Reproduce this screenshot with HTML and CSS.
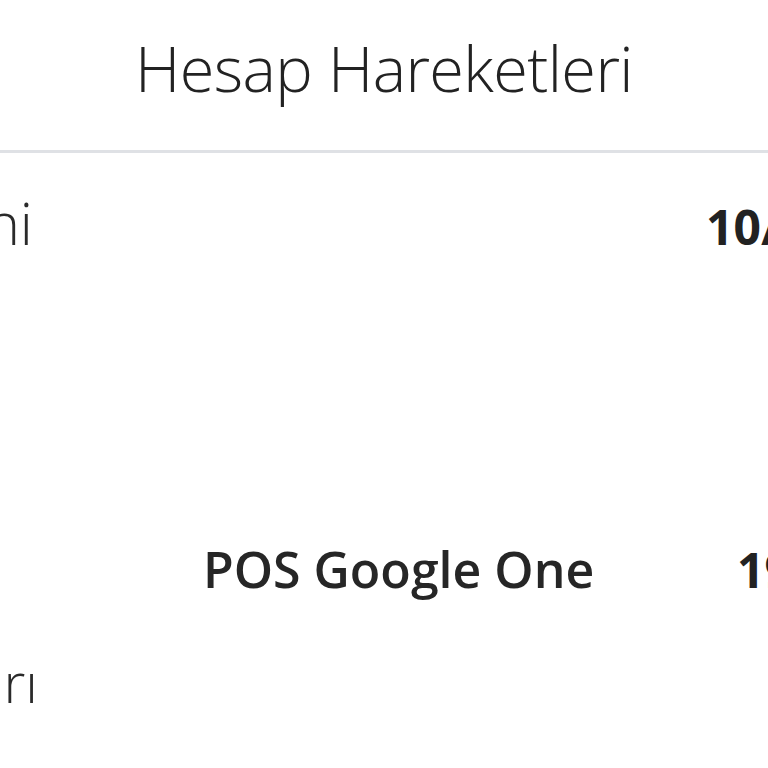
FILE: index.html
```html
<!DOCTYPE html>
<html lang="tr">
<head>
<meta charset="utf-8">
<title>Hesap Hareketleri</title>
<link rel="stylesheet" href="styles.css">
</head>
<body>
<div class="screen">
  <header class="topbar">
    <h1 class="title">Hesap Hareketleri</h1>
  </header>
  <div class="divider"></div>
  <main class="list">
    <div class="row">
      <div class="label">Hepsini</div>
      <div class="desc"></div>
      <div class="date">10/05/2024</div>
    </div>
    <div class="row row--item">
      <div class="desc">POS Google One</div>
      <div class="date date--narrow">19/04/2024</div>
      <div class="label label--below">Kart Harcamaları</div>
    </div>
  </main>
</div>
</body>
</html>
```
FILE: styles.css
```css
html, body {
  margin: 0;
  padding: 0;
  background: #ffffff;
}
body {
  font-family: "Open Sans", "Noto Sans", sans-serif;
  color: #262626;
}
.screen {
  width: 768px;
  height: 768px;
  overflow: hidden;
  display: flex;
  flex-direction: column;
}
.topbar {
  height: 150px;
  flex-shrink: 0;
  display: flex;
  align-items: flex-start;
  justify-content: center;
}
.title {
  margin: 26px 0 0 0;
  font-size: 63px;
  font-weight: 350;
  line-height: 84px;
  letter-spacing: -0.6px;
  color: #222222;
  white-space: nowrap;
}
.divider {
  height: 3px;
  background: #dfe1e5;
  flex-shrink: 0;
}
.list {
  display: flex;
  flex-direction: column;
  gap: 262px;
  margin-top: 30px;
  margin-left: -400px;
  width: 1500px;
}
.row {
  display: grid;
  grid-template-columns: 433px 673px 1fr;
  align-items: baseline;
}
.row--item {
  row-gap: 31px;
}
.label {
  grid-column: 1;
  grid-row: 1;
  text-align: right;
  font-size: 58px;
  font-weight: 300;
  line-height: 80px;
  color: #2a2a2a;
  white-space: nowrap;
}
.label--below {
  grid-row: 2;
  margin-right: -5px;
  font-size: 56px;
}
.desc {
  grid-column: 2;
  grid-row: 1;
  font-size: 50px;
  font-weight: 600;
  line-height: 80px;
  color: #262626;
  padding-left: 170px;
  white-space: nowrap;
}
.date {
  grid-column: 3;
  grid-row: 1;
  font-size: 48px;
  font-weight: 700;
  line-height: 80px;
  color: #222222;
  white-space: nowrap;
}
.date--narrow {
  padding-left: 31px;
}
```
